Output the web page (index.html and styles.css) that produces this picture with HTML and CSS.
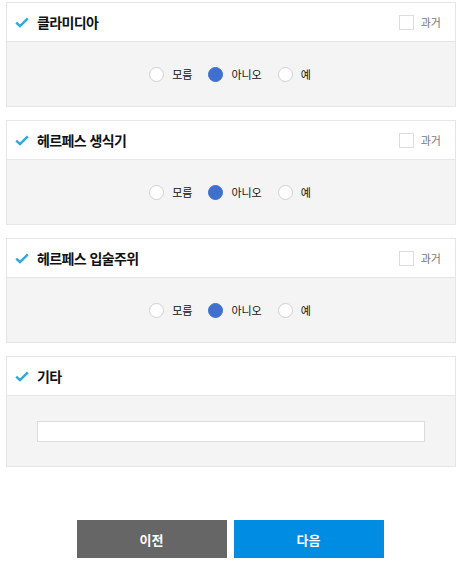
FILE: index.html
```html
<!DOCTYPE html>
<html lang="ko">
<head>
<meta charset="utf-8">
<link rel="stylesheet" href="styles.css">
</head>
<body>
<div class="page">
  <section class="card">
    <div class="card-head">
      <svg class="check" width="14" height="11" viewBox="0 0 14 11"><path d="M1.2 5.6 L5 9.2 L12.8 1.4" fill="none" stroke="#2aa9e0" stroke-width="2.4"/></svg>
      <span class="title">클라미디아</span>
      <span class="past"><span class="box"></span>과거</span>
    </div>
    <div class="card-body">
      <div class="opt"><span class="radio"></span>모름</div>
      <div class="opt"><span class="radio on"></span>아니오</div>
      <div class="opt"><span class="radio"></span>예</div>
    </div>
  </section>
  <section class="card">
    <div class="card-head">
      <svg class="check" width="14" height="11" viewBox="0 0 14 11"><path d="M1.2 5.6 L5 9.2 L12.8 1.4" fill="none" stroke="#2aa9e0" stroke-width="2.4"/></svg>
      <span class="title">헤르페스 생식기</span>
      <span class="past"><span class="box"></span>과거</span>
    </div>
    <div class="card-body">
      <div class="opt"><span class="radio"></span>모름</div>
      <div class="opt"><span class="radio on"></span>아니오</div>
      <div class="opt"><span class="radio"></span>예</div>
    </div>
  </section>
  <section class="card">
    <div class="card-head">
      <svg class="check" width="14" height="11" viewBox="0 0 14 11"><path d="M1.2 5.6 L5 9.2 L12.8 1.4" fill="none" stroke="#2aa9e0" stroke-width="2.4"/></svg>
      <span class="title">헤르페스 입술주위</span>
      <span class="past"><span class="box"></span>과거</span>
    </div>
    <div class="card-body">
      <div class="opt"><span class="radio"></span>모름</div>
      <div class="opt"><span class="radio on"></span>아니오</div>
      <div class="opt"><span class="radio"></span>예</div>
    </div>
  </section>
  <section class="card">
    <div class="card-head">
      <svg class="check" width="14" height="11" viewBox="0 0 14 11"><path d="M1.2 5.6 L5 9.2 L12.8 1.4" fill="none" stroke="#2aa9e0" stroke-width="2.4"/></svg>
      <span class="title">기타</span>
    </div>
    <div class="card-body text-body">
      <div class="input"></div>
    </div>
  </section>
  <div class="buttons">
    <button class="btn prev">이전</button>
    <button class="btn next">다음</button>
  </div>
</div>
</body>
</html>
```
FILE: styles.css
```css
* { box-sizing: border-box; }
body {
  margin: 0;
  font-family: "Noto Sans CJK KR", "Noto Sans", sans-serif;
  color: #111;
  background: #fff;
}
.page {
  padding: 2px 0 0 6px;
  width: 456px;
}
.card {
  width: 450px;
  border: 1px solid #e5e5e5;
  margin-bottom: 13px;
}
.card-head {
  height: 39px;
  border-bottom: 1px solid #e5e5e5;
  display: flex;
  align-items: center;
  padding: 0 14px 0 8px;
  background: #fff;
}
.check { margin-right: 8px; flex: none; }
.title {
  font-size: 14px;
  font-weight: bold;
  letter-spacing: -0.6px;
}
.past {
  margin-left: auto;
  display: flex;
  align-items: center;
  font-size: 11px;
  color: #777;
}
.box {
  width: 15px;
  height: 15px;
  border: 1px solid #ddd;
  background: #fff;
  margin-right: 7px;
}
.card-body {
  height: 64px;
  background: #f4f4f4;
  display: flex;
  align-items: center;
  justify-content: center;
  gap: 16px;
  padding-right: 2px;
}
.opt {
  display: flex;
  align-items: center;
  font-size: 11px;
  color: #111;
}
.radio {
  width: 15px;
  height: 15px;
  border-radius: 50%;
  border: 1px solid #d0d0d0;
  background: #fff;
  margin-right: 8px;
}
.radio.on {
  background: #3f6fcf;
  border-color: #3f6fcf;
}
.text-body {
  height: 70px;
  padding: 0 30px;
}
.input {
  width: 100%;
  height: 21px;
  border: 1px solid #dcdcdc;
  background: #fff;
}
.buttons {
  display: flex;
  justify-content: center;
  gap: 7px;
  width: 450px;
  margin-top: 53px;
  padding-right: 2px;
}
.btn {
  width: 150px;
  height: 38px;
  border: 0;
  color: #fff;
  font-family: "Noto Sans CJK KR", sans-serif;
  font-size: 13px;
  font-weight: bold;
}
.prev { background: #666; }
.next { background: #008ce3; }
```
